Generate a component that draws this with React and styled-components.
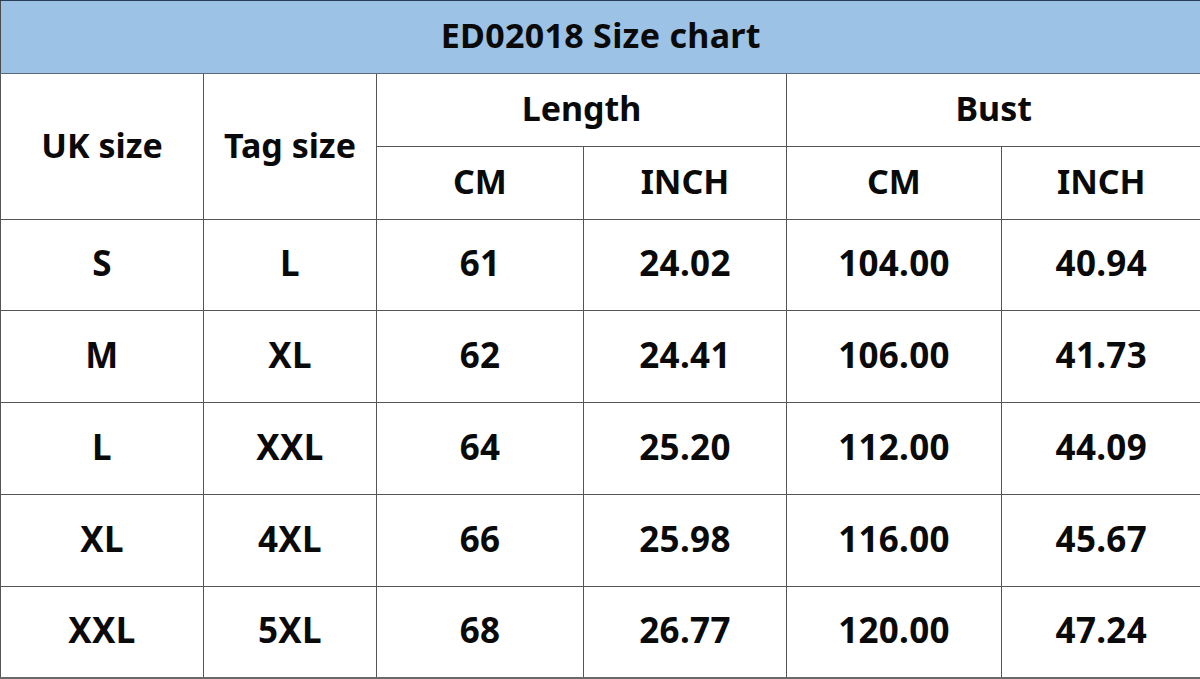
import React from "react";
import styled, { createGlobalStyle } from "styled-components";

const rows = [
  ["S", "L", "61", "24.02", "104.00", "40.94"],
  ["M", "XL", "62", "24.41", "106.00", "41.73"],
  ["L", "XXL", "64", "25.20", "112.00", "44.09"],
  ["XL", "4XL", "66", "25.98", "116.00", "45.67"],
  ["XXL", "5XL", "68", "26.77", "120.00", "47.24"]
];

const rowHeights = [90, 91, 91, 91, 90];
const widths = [203, 173, 207, 203, 215, 199];

const GlobalStyle = createGlobalStyle`
  html, body {
    margin: 0;
    padding: 0;
    background: #ffffff;
  }
`;

const Chart = styled.table`
  width: 1200px;
  border-collapse: collapse;
  table-layout: fixed;
  font-family: "Noto Sans", "Open Sans", sans-serif;
  font-weight: 700;
  color: #0a0a0a;
  border-left: 1px solid #4a4a4a;
  border-bottom: 2px solid #6a6a6a;
`;

const TitleCell = styled.th`
  height: 68px;
  padding: 0 0 4px;
  background: #9cc2e6;
  border-top: 1px solid #2c3e57;
  border-bottom: 1px solid #5a6a7a;
  font-size: 34px;
  font-weight: 700;
  letter-spacing: 0.3px;
`;

const HeadCell = styled.th`
  height: 68px;
  padding: 0 0 4px;
  border: 1px solid #555555;
  border-top: none;
  font-size: 34px;
  font-weight: 700;
  text-align: center;
  vertical-align: middle;
  &:last-child {
    border-right: none;
  }
`;

const Cell = styled.td`
  height: ${p => p.$h - 5}px;
  padding: 0 0 5px;
  border: 1px solid #555555;
  font-size: 35px;
  letter-spacing: 0.3px;
  text-align: center;
  vertical-align: middle;
  &:last-child {
    border-right: none;
  }
`;

export default function App() {
  return (
    <>
      <GlobalStyle />
      <Chart>
        <colgroup>
          {widths.map((w, i) => (
            <col key={i} style={{ width: w }} />
          ))}
        </colgroup>
        <thead>
          <tr>
            <TitleCell colSpan={6}>ED02018 Size chart</TitleCell>
          </tr>
          <tr>
            <HeadCell rowSpan={2}>UK size</HeadCell>
            <HeadCell rowSpan={2}>Tag size</HeadCell>
            <HeadCell colSpan={2}>Length</HeadCell>
            <HeadCell colSpan={2}>Bust</HeadCell>
          </tr>
          <tr>
            <HeadCell>CM</HeadCell>
            <HeadCell>INCH</HeadCell>
            <HeadCell>CM</HeadCell>
            <HeadCell>INCH</HeadCell>
          </tr>
        </thead>
        <tbody>
          {rows.map((r, ri) => (
            <tr key={r[0]}>
              {r.map((v, i) => (
                <Cell key={i} $h={rowHeights[ri]}>{v}</Cell>
              ))}
            </tr>
          ))}
        </tbody>
      </Chart>
    </>
  );
}
